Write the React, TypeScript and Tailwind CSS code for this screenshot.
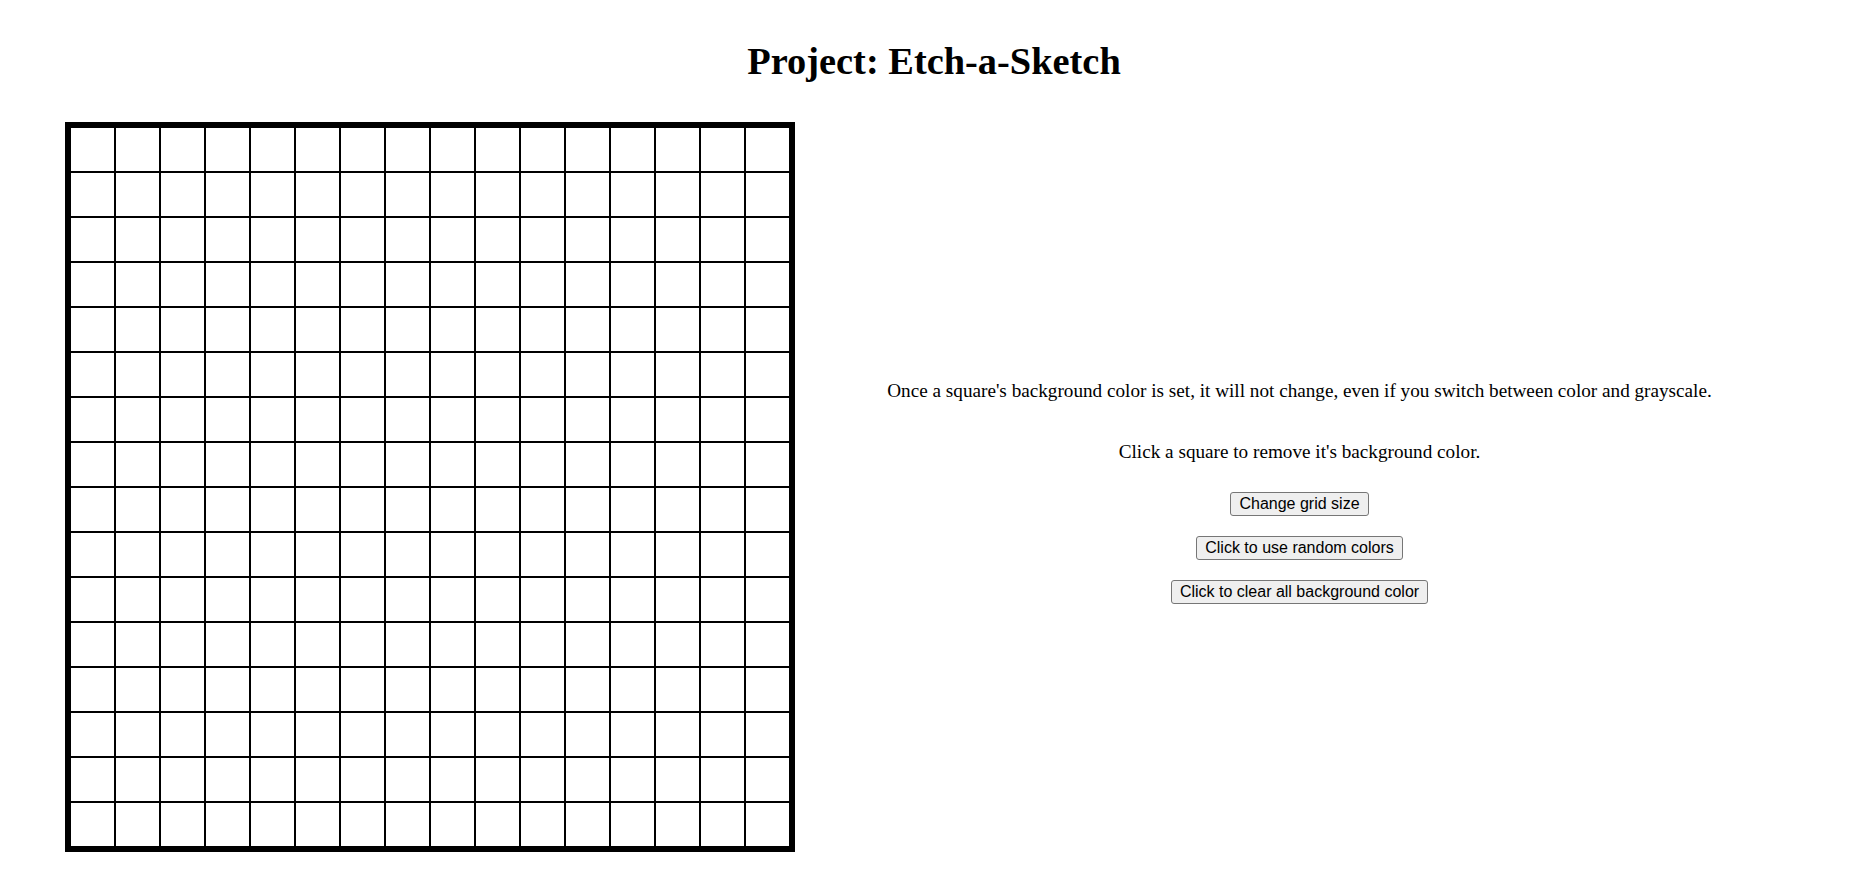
import React from "react";

const cells = Array.from({ length: 256 });

export default function App() {
  return (
    <div className="min-h-[870px] bg-white pt-[40px] text-black" style={{ fontFamily: '"Liberation Serif", "Times New Roman", serif' }}>
      <h1 className="text-center text-[38.4px] font-bold leading-[42px] pr-[8px]">Project: Etch-a-Sketch</h1>

      <div className="mt-[40px] flex pl-[65px] pr-[72px]">
        <div className="box-content grid h-[720px] w-[720px] shrink-0 grid-cols-16 border-[5px] border-black">
          {cells.map((_, i) => (
            <div key={i} className="border border-black bg-white" />
          ))}
        </div>

        <div className="flex flex-1 flex-col items-center justify-center pt-[10px] text-[19.2px] leading-[22px]">
          <p>Once a square's background color is set, it will not change, even if you switch between color and grayscale.</p>
          <p className="mt-[39px]">Click a square to remove it's background color.</p>
          <div className="mt-[29px] flex flex-col items-center gap-[20px]" style={{ fontFamily: '"Liberation Sans", Arial, sans-serif' }}>
            <button className="rounded-[3px] border border-[#767676] bg-[#efefef] px-[8px] py-[2px] text-[16px] leading-[18px] text-black">Change grid size</button>
            <button className="rounded-[3px] border border-[#767676] bg-[#efefef] px-[8px] py-[2px] text-[16px] leading-[18px] text-black">Click to use random colors</button>
            <button className="rounded-[3px] border border-[#767676] bg-[#efefef] px-[8px] py-[2px] text-[16px] leading-[18px] text-black">Click to clear all background color</button>
          </div>
        </div>
      </div>
    </div>
  );
}
